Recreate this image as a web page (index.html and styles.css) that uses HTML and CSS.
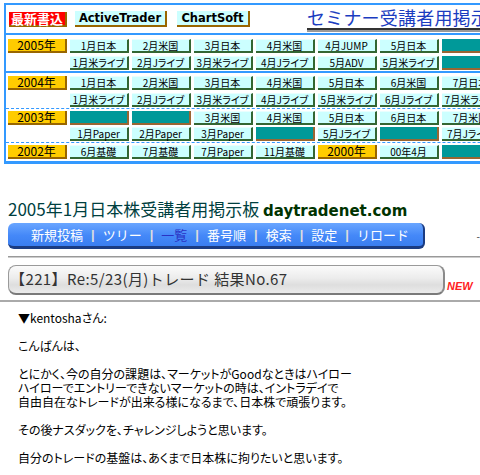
FILE: index.html
```html
<!DOCTYPE html>
<html lang="ja">
<head>
<meta charset="utf-8">
<link rel="stylesheet" href="styles.css">
</head>
<body>
<div class="board">
  <div class="head">
    <span class="latest">最新書込</span>
    <span class="hbtn at">ActiveTrader</span>
    <span class="hbtn cs">ChartSoft</span>
    <span class="seminar">セミナー受講者用掲示板</span>
  </div>
  <div class="sec s1">
    <div class="c y">2005年</div><div class="c b">1月日本</div><div class="c b">2月米国</div><div class="c b">3月日本</div><div class="c b">4月米国</div><div class="c b">4月JUMP</div><div class="c b">5月日本</div><div class="c t"></div>
    <div class="c e"></div><div class="c b">1月米ライブ</div><div class="c b">2月Jライブ</div><div class="c b">3月米ライブ</div><div class="c b">4月Jライブ</div><div class="c b">5月ADV</div><div class="c b">5月米ライブ</div><div class="c t"></div>
  </div>
  <div class="sec s2">
    <div class="c y">2004年</div><div class="c b">1月日本</div><div class="c b">2月米国</div><div class="c b">3月日本</div><div class="c b">4月米国</div><div class="c b">5月日本</div><div class="c b">6月米国</div><div class="c b">7月日本</div>
    <div class="c e"></div><div class="c b">1月米ライブ</div><div class="c b">2月Jライブ</div><div class="c b">3月米ライブ</div><div class="c b">4月Jライブ</div><div class="c b">5月米ライブ</div><div class="c b">6月Jライブ</div><div class="c b">7月米ライブ</div>
  </div>
  <div class="sec s3">
    <div class="c y">2003年</div><div class="c t"></div><div class="c t"></div><div class="c b">3月米国</div><div class="c b">4月米国</div><div class="c b">5月日本</div><div class="c b">6月日本</div><div class="c b">7月米国</div>
    <div class="c e"></div><div class="c b">1月Paper</div><div class="c b">2月Paper</div><div class="c b">3月Paper</div><div class="c t"></div><div class="c b">5月Jライブ</div><div class="c t"></div><div class="c b">7月Jライブ</div>
  </div>
  <div class="sec s4">
    <div class="c y">2002年</div><div class="c b">6月基礎</div><div class="c b">7月基礎</div><div class="c b">7月Paper</div><div class="c b">11月基礎</div><div class="c y">2000年</div><div class="c b">00年4月</div><div class="c t"></div>
  </div>
</div>

<h1 class="title">2005年1月日本株受講者用掲示板 <span class="site">daytradenet.com</span></h1>

<div class="navrow">
  <div class="nav">
    <span class="ni">新規投稿</span><span class="sep">|</span>
    <span class="ni">ツリー</span><span class="sep">|</span>
    <span class="ni cur">一覧</span><span class="sep">|</span>
    <span class="ni">番号順</span><span class="sep">|</span>
    <span class="ni">検索</span><span class="sep">|</span>
    <span class="ni">設定</span><span class="sep">|</span>
    <span class="ni">リロード</span>
  </div>
  <span class="dash">-</span>
</div>

<div class="rule"></div>

<div class="postrow">
  <div class="subject">【221】Re:5/23(月)トレード 結果No.67</div>
  <span class="new">NEW</span>
</div>

<div class="body">
  <p class="msg">▼kentoshaさん:<br><br>こんばんは、<br><br>とにかく、今の自分の課題は、マーケットがGoodなときはハイロー<br>ハイローでエントリーできないマーケットの時は、イントラデイで<br>自由自在なトレードが出来る様になるまで、日本株で頑張ります。<br><br>その後ナスダックを、チャレンジしようと思います。<br><br>自分のトレードの基盤は、あくまで日本株に拘りたいと思います。</p>
</div>
</body>
</html>
```
FILE: styles.css
```css
html, body {
  margin: 0;
  padding: 0;
  overflow: hidden;
  background: #ffffff;
}
body {
  padding-top: 3px;
  font-family: "Noto Sans CJK JP", "Liberation Sans", sans-serif;
  color: #000;
}
.board {
  margin-left: 4px;
  width: 600px;
  border: 2px solid #3399ff;
  border-bottom-width: 3px;
  border-right: none;
}
.head {
  height: 28px;
  display: flex;
  align-items: center;
  border-bottom: 2px solid #3399ff;
}
.latest {
  margin-left: 3px;
  width: 58px;
  height: 15px;
  box-sizing: border-box;
  background: #ff0000;
  color: #fff;
  font-weight: bold;
  font-size: 13px;
  line-height: 13px;
  text-align: center;
  border-right: 2px solid #996600;
  border-bottom: 2px solid #996600;
}
.hbtn {
  height: 16px;
  box-sizing: border-box;
  background: #ccffff;
  border-right: 2px solid #996600;
  border-bottom: 2px solid #996600;
  font-family: "DejaVu Sans", sans-serif;
  font-weight: bold;
  font-size: 11.5px;
  line-height: 14px;
  text-align: center;
}
.at { margin-left: 8px; width: 92px; }
.cs { margin-left: 10px; width: 73px; }
.seminar {
  margin-left: 57px;
  margin-top: -2px;
  font-size: 18px;
  line-height: 22px;
  color: #1a3cc0;
  white-space: nowrap;
  letter-spacing: 0.2px;
  border-bottom: 2px solid #333;
  box-shadow: 0 2px 0 #999;
}
.sec {
  display: grid;
  grid-template-columns: repeat(8, 59px);
  grid-auto-rows: 14px;
  column-gap: 3px;
  row-gap: 3px;
  padding-left: 2px;
}
.s1 { padding-top: 4px; padding-bottom: 1px; border-bottom: 2px solid #3399ff; }
.s2 { padding-top: 3px; padding-bottom: 1px; border-bottom: 1px dashed #3399ff; }
.s3 { padding-top: 2px; padding-bottom: 1px; row-gap: 2px; border-bottom: 1px dashed #3399ff; }
.s4 { padding-top: 2px; padding-bottom: 2px; }
.c {
  box-sizing: border-box;
  height: 14px;
  font-size: 10px;
  line-height: 12px;
  text-align: center;
  white-space: nowrap;
  font-feature-settings: "palt";
}
.b {
  background: #ccffff;
  border-top: 1px solid #e8ffff;
  border-right: 2px solid #336633;
  border-bottom: 2px solid #336633;
  line-height: 11px;
}
.y {
  background: #ffcc00;
  border-right: 2px solid #996600;
  border-bottom: 2px solid #996600;
  font-size: 12px;
  line-height: 12px;
}
.t {
  background: #009999;
  border-right: 2px solid #996633;
  border-bottom: 2px solid #996633;
}
.title {
  margin: 34px 0 0 8px;
  font-size: 17px;
  line-height: 22px;
  font-weight: normal;
  color: #003f3f;
  white-space: nowrap;
}
.site {
  font-family: "DejaVu Sans", sans-serif;
  font-weight: bold;
  font-size: 15px;
  color: #003300;
}
.navrow {
  margin: 1px 0 0 8px;
  display: flex;
  align-items: center;
}
.nav {
  width: 417px;
  height: 26px;
  box-sizing: border-box;
  border-radius: 6px;
  background: linear-gradient(#6aa6ff, #4488f8 55%, #3a7ef0);
  border-bottom: 3px solid #1b3c82;
  border-right: 2px solid #1b3c82;
  display: flex;
  align-items: center;
  padding-left: 23px;
  font-size: 13px;
  color: #ffffff;
  white-space: nowrap;
}
.cur { color: #2a33c4; }
.sep {
  margin: 0 8px;
  color: #dddddd;
  font-weight: bold;
  font-family: "Liberation Sans", sans-serif;
}
.dash {
  margin-left: auto;
  font-size: 10px;
  line-height: 10px;
  color: #333;
}
.rule {
  margin: 7px 0 0 8px;
  height: 0;
  border-top: 1px solid #999;
  border-bottom: 1px solid #ccc;
}
.postrow {
  margin: 7px 0 0 8px;
  display: flex;
  align-items: flex-end;
}
.subject {
  width: 437px;
  height: 30px;
  box-sizing: border-box;
  border: 1px solid #9a9a9a;
  border-bottom: 2px solid #7a7a7a;
  border-right: 2px solid #8a8a8a;
  border-radius: 8px;
  background: linear-gradient(#fbfbfb, #ececec 45%, #dedede 70%, #ebebeb);
  padding-left: 1px;
  font-size: 15px;
  letter-spacing: 0.4px;
  line-height: 26px;
  color: #333;
  white-space: nowrap;
}
.new {
  margin-left: 2px;
  margin-bottom: 3px;
  font-family: "Liberation Sans", sans-serif;
  font-weight: bold;
  font-style: italic;
  font-size: 11px;
  line-height: 11px;
  color: #ff2222;
}
.body {
  margin-top: 5px;
  border-top: 2px solid #aaaaaa;
  padding: 9px 0 0 18px;
}
.msg {
  margin: 0;
  font-size: 12px;
  line-height: 14px;
  font-feature-settings: "palt";
  white-space: nowrap;
}
```
